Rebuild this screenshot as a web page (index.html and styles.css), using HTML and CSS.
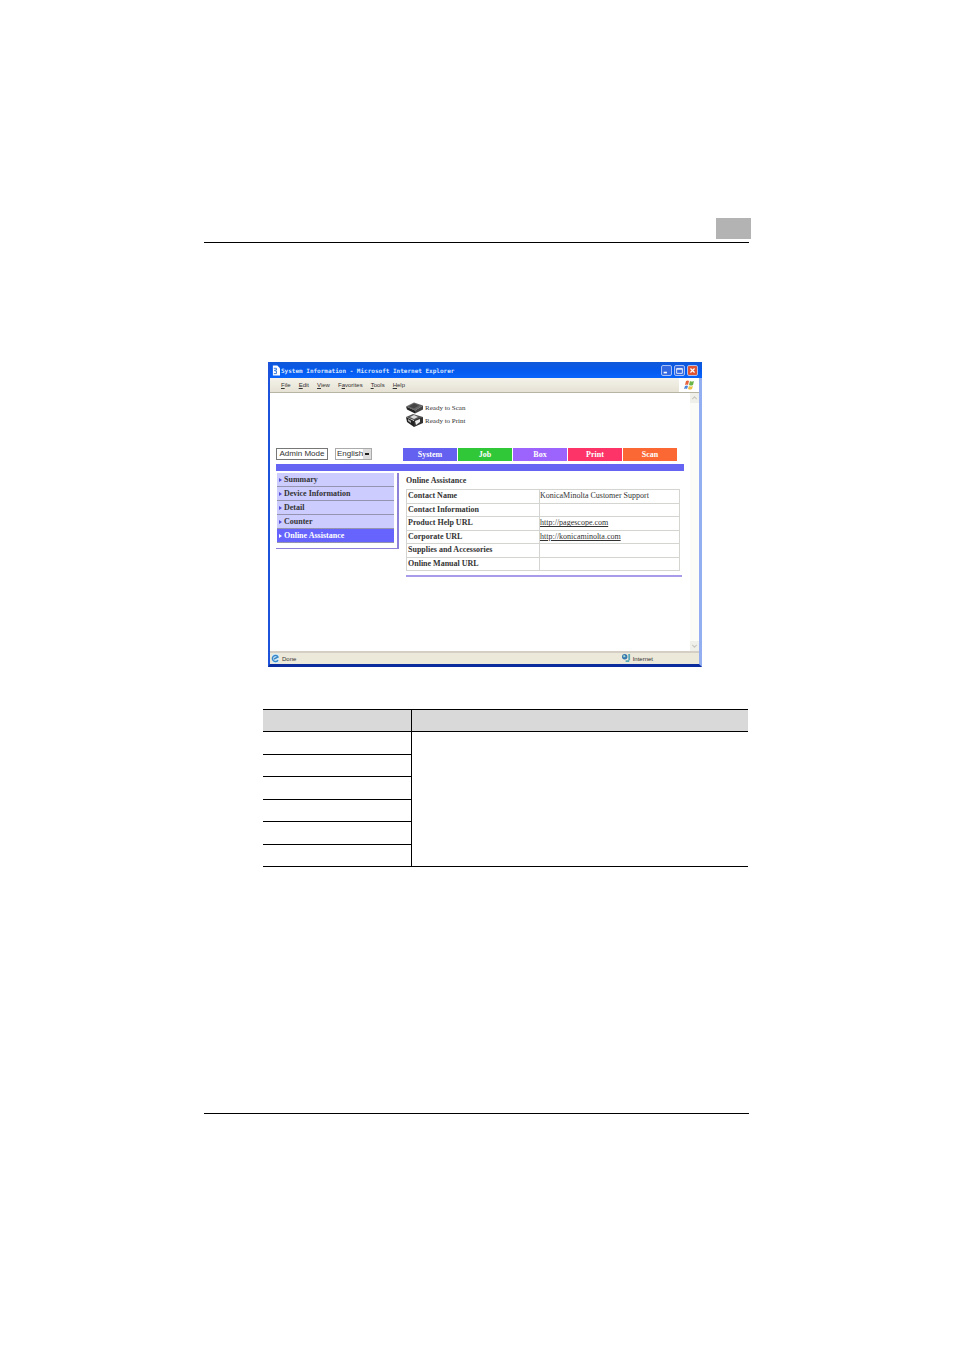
FILE: index.html
```
<!DOCTYPE html>
<html lang="en">
  <head>
    <meta charset="UTF-8" />
    <title>Online Assistance</title>
    <link rel="stylesheet" href="styles.css">
  </head>
  <body>
    <div class="page">
      <header class="page-header"><span class="chapter-box"></span></header>

      <main class="page-body">
        <div class="window">
          <div class="title-bar">
            <svg class="title-icon" viewBox="0 0 9 11">
              <path d="M1 0h5l3 3v8H1z" fill="#fff" />
              <path d="M2 3h3v2H3v1h2v3H2" fill="none" stroke="#2870d8" />
            </svg>
            <span class="title-text">System Information - Microsoft Internet Explorer</span>
            <div class="window-buttons">
              <button type="button" aria-label="Minimize"><svg viewBox="0 0 11 11"><path d="M2 8h4" stroke="#fff" stroke-width="2" /></svg></button>
              <button type="button" aria-label="Maximize"><svg viewBox="0 0 11 11"><path d="M2 3h7v6H2zM2 4h7" fill="none" stroke="#fff" /></svg></button>
              <button type="button" class="close" aria-label="Close"><svg viewBox="0 0 11 11"><path d="M3 3l5 5M8 3l-5 5" stroke="#fff" stroke-width="1.5" /></svg></button>
            </div>
          </div>

          <div class="menu-bar">
            <nav class="menu">
              <a href="#"><u>F</u>ile</a>
              <a href="#"><u>E</u>dit</a>
              <a href="#"><u>V</u>iew</a>
              <a href="#">F<u>a</u>vorites</a>
              <a href="#"><u>T</u>ools</a>
              <a href="#"><u>H</u>elp</a>
            </nav>
            <div class="flag">
              <svg viewBox="0 0 10 10">
                <path d="M2 1q2-1 3 0L4 5q-1-1-3 0z" fill="#e8643c" />
                <path d="M6 1q2 1 4 0L9 5Q7 6 5 5z" fill="#6cb648" />
                <path d="M1 6q2-1 3 0L3 9q-1-1-3 0z" fill="#4c86d8" />
                <path d="M5 6q2 1 4 0L8 9Q6 10 4 9z" fill="#f0c040" />
              </svg>
            </div>
          </div>

          <div class="viewport">
            <div class="content">
              <div class="status-list">
                <div class="status-item">
                  <svg viewBox="0 0 17 12">
                    <path d="M0 5l8-4 9 3-8 5z" fill="#666" />
                    <path d="M0 5l9 4v3L1 8z" fill="#222" />
                    <path d="M9 9l8-5v4l-8 4z" fill="#444" />
                    <path d="M3 5l5-3 5 2-5 3z" fill="#444" />
                  </svg>
                  Ready to Scan
                </div>
                <div class="status-item">
                  <svg viewBox="0 0 17 13">
                    <path d="M0 3l7-3 10 3-7 4z" fill="#555" />
                    <path d="M0 3l8 4v6L1 8z" fill="#222" />
                    <path d="M8 6l9-3v6l-9 4z" fill="#333" />
                    <path d="M4 3l4-2 4 2-4 2z" fill="#ddd" />
                    <path d="M9 7l5-2v3l-4 3z" fill="#eee" />
                    <path d="M2 5l3 2v2L2 7z" fill="#aaa" />
                  </svg>
                  Ready to Print
                </div>
              </div>

              <div class="toolbar">
                <div class="controls">
                  <button type="button" class="admin-button">Admin Mode</button>
                  <div class="language">
                    <select aria-label="Language">
                      <option>English</option>
                    </select>
                  </div>
                </div>
                <nav class="tabs">
                  <a href="#" class="tab-system">System</a>
                  <a href="#" class="tab-job">Job</a>
                  <a href="#" class="tab-box">Box</a>
                  <a href="#" class="tab-print">Print</a>
                  <a href="#" class="tab-scan">Scan</a>
                </nav>
              </div>

              <div class="divider"></div>

              <div class="columns">
                <nav class="side-menu">
                  <a href="#">Summary</a>
                  <a href="#">Device Information</a>
                  <a href="#">Detail</a>
                  <a href="#">Counter</a>
                  <a href="#" class="active">Online Assistance</a>
                </nav>
                <section class="details">
                  <h1>Online Assistance</h1>
                  <table class="info-table">
                    <tr><th>Contact Name</th><td>KonicaMinolta Customer Support</td></tr>
                    <tr><th>Contact Information</th><td></td></tr>
                    <tr><th>Product Help URL</th><td><a href="#">http://pagescope.com</a></td></tr>
                    <tr><th>Corporate URL</th><td><a href="#">http://konicaminolta.com</a></td></tr>
                    <tr><th>Supplies and Accessories</th><td></td></tr>
                    <tr><th>Online Manual URL</th><td></td></tr>
                  </table>
                </section>
              </div>
            </div>
            <div class="scrollbar">
              <svg viewBox="0 0 8 8"><path d="M2 5l2-2 2 2" fill="none" stroke="#c8c8c0" /></svg>
              <svg viewBox="0 0 8 8"><path d="M2 3l2 2 2-2" fill="none" stroke="#c8c8c0" /></svg>
            </div>
          </div>

          <div class="status-bar">
            <div class="status-left">
              <svg viewBox="0 0 9 9">
                <path d="M1 0h7v9H1z" fill="#d8ecf8" />
                <path d="M7 6a3 3 0 1 1 0-3L3 5" fill="none" stroke="#3888c8" stroke-width="1.5" />
              </svg>
              Done
            </div>
            <div class="status-right">
              <svg viewBox="0 0 10 10">
                <circle cx="3" cy="3" r="3" fill="#3878b0" />
                <path d="M1 2l2-1 1 2-2 1z" fill="#a8dcd0" />
                <path d="M8 0v7M4 8h4" stroke="#58a8b8" stroke-width="2" />
              </svg>
              Internet
            </div>
          </div>
        </div>

        <table class="manual-table">
          <thead>
            <tr><th></th><th></th></tr>
          </thead>
          <tbody>
            <tr><td></td><td rowspan="6"></td></tr>
            <tr><td></td></tr>
            <tr><td></td></tr>
            <tr><td></td></tr>
            <tr><td></td></tr>
            <tr><td></td></tr>
          </tbody>
        </table>
      </main>

      <footer class="page-footer"></footer>
    </div>
  </body>
</html>
```
FILE: styles.css
```
* {
  box-sizing: border-box;
}

body {
  margin: 0;
  background: #fff;
  color: #333;
  font-family: "Liberation Sans", Arial, sans-serif;
}

a {
  color: inherit;
  text-decoration: none;
}

.page {
  display: flex;
  flex-direction: column;
  min-height: 100vh;
  padding: 218px 205px 236px 204px;
}

.page-header {
  display: flex;
  justify-content: flex-end;
  padding-bottom: 3px;
  border-bottom: 1px solid #000;
}

.chapter-box {
  width: 35px;
  height: 21px;
  margin-right: -2px;
  background: #b3b3b3;
}

.page-body {
  flex: 1;
  padding: 119px 1px 0 59px;
}

.page-footer {
  border-top: 1px solid #000;
}

/* browser window */
.window {
  margin: 0 46px 0 5px;
  border: solid #1c52dc;
  border-width: 0 3px 3px 2px;
  border-right-color: #94aef2;
  border-bottom-color: #0a2c9c;
}

.title-bar {
  display: flex;
  align-items: center;
  height: 16px;
  margin-right: -3px;
  padding: 0 4px 0 2px;
  background: linear-gradient(#1058d8, #0458ec 50%, #0864fc);
  color: #d4e4ff;
}

.title-icon {
  width: 8px;
  height: 11px;
}

.title-text {
  flex: 1;
  margin-left: 1px;
  font: bold 6px "DejaVu Sans Mono", monospace;
  white-space: nowrap;
}

.window-buttons {
  display: flex;
  gap: 2px;
}

.window-buttons button {
  width: 11px;
  height: 11px;
  padding: 0;
  border: 1px solid #a8c0f4;
  border-radius: 2px;
  background: #3468e0;
}

.window-buttons .close {
  background: #e05434;
}

.window-buttons svg {
  display: block;
  width: 100%;
  height: 100%;
}

.menu-bar {
  display: flex;
  justify-content: space-between;
  height: 15px;
  border-bottom: 1px solid #b8b4a4;
  background: linear-gradient(#f4f2ea, #e6e2d4);
}

.menu {
  display: flex;
  align-items: center;
  gap: 8px;
  padding-left: 11px;
  font-size: 6px;
}

.flag {
  display: flex;
  align-items: center;
  justify-content: center;
  width: 20px;
  background: #fff;
}

.flag svg {
  width: 10px;
  height: 10px;
}

.viewport {
  display: flex;
  height: 258px;
  font-family: "Liberation Serif", "Times New Roman", serif;
}

.content {
  flex: 1;
  padding: 8px 6px 0;
}

.scrollbar {
  display: flex;
  flex-direction: column;
  justify-content: space-between;
  width: 9px;
  background: #fbfbf8;
}

.scrollbar svg {
  width: 9px;
  height: 10px;
  background: #f0f0ea;
}

.status-list {
  padding-left: 130px;
}

.status-item {
  display: flex;
  align-items: center;
  gap: 2px;
  height: 13px;
  font-size: 7px;
}

.status-item svg {
  width: 17px;
  height: 13px;
}

.toolbar {
  display: flex;
  margin-top: 21px;
  padding-right: 7px;
}

.controls {
  display: flex;
  align-items: flex-start;
  gap: 7px;
  width: 127px;
}

.admin-button,
.language select {
  display: block;
  height: 12px;
  padding: 0;
  border: 1px solid #777;
  background: #fff;
  color: #333;
  font-family: "Liberation Sans", Arial, sans-serif;
  font-size: 8px;
  line-height: 10px;
}

.admin-button {
  width: 52px;
}

.language {
  position: relative;
}

.language select {
  width: 37px;
  padding-left: 1px;
  border-color: #aaa;
  appearance: none;
}

.language::after {
  content: "";
  position: absolute;
  top: 1px;
  right: 1px;
  width: 8px;
  height: 10px;
  background: #ddd linear-gradient(#222, #222) center / 4px 2px no-repeat;
  pointer-events: none;
}

.tabs {
  display: flex;
  flex: 1;
  gap: 1px;
}

.tabs a {
  flex: 1;
  height: 13px;
  color: #fff;
  font-size: 8px;
  font-weight: bold;
  line-height: 13px;
  text-align: center;
}

.tab-system {
  background: #6460f0;
}

.tab-job {
  background: #30c838;
}

.tab-box {
  background: #9c64fc;
}

.tab-print {
  background: #fc3468;
}

.tab-scan {
  background: #fc6834;
}

.divider {
  height: 7px;
  margin-top: 3px;
  background: #6664f2;
}

.columns {
  display: flex;
  gap: 7px;
  padding: 2px 2px 0 0;
}

.side-menu {
  align-self: flex-start;
  width: 123px;
  padding: 0 3px 5px 1px;
  border: solid #8c80d8;
  border-width: 0 2px 1px 0;
}

.side-menu a {
  display: flex;
  align-items: center;
  gap: 2px;
  height: 14px;
  padding-left: 2px;
  border-bottom: 1px solid #9494b0;
  background: #ccccff;
  font-size: 8px;
  font-weight: bold;
}

.side-menu a::before {
  content: "";
  border: solid transparent;
  border-width: 2px 0 2px 3px;
  border-left-color: #5450dc;
}

.side-menu .active {
  background: #6664fc;
  color: #fff;
}

.side-menu .active::before {
  border-left-color: #fff;
}

.details {
  flex: 1;
  padding: 3px 0 4px;
  border-bottom: 2px solid #a89ce8;
}

.details h1 {
  margin: 0 0 3px;
  font-size: 8px;
  line-height: 10px;
}

.info-table {
  width: calc(100% - 2px);
  height: 82px;
  border: 1px solid #d0d0cc;
  border-collapse: collapse;
  font-size: 8px;
  line-height: 10px;
}

.info-table th,
.info-table td {
  padding: 0 1px;
  border: 1px solid #d4d4d0;
  text-align: left;
}

.info-table th {
  width: 133px;
}

.info-table td {
  padding-left: 0;
}

.info-table a {
  text-decoration: underline;
}

.status-bar {
  display: flex;
  align-items: center;
  justify-content: space-between;
  height: 13px;
  padding: 0 46px 0 1px;
  border-top: 2px solid #d4cec4;
  background: #ece8da;
  font-size: 6px;
}

.status-left,
.status-right {
  display: flex;
  align-items: center;
  gap: 2px;
}

.status-bar svg {
  width: 9px;
  height: 9px;
}

/* settings table under the window */
.manual-table {
  width: 100%;
  height: 158px;
  margin-top: 42px;
  border-collapse: collapse;
}

.manual-table th,
.manual-table td {
  padding: 0;
  border: solid #000;
  border-width: 1px 0;
}

.manual-table th {
  height: 22px;
  background: #d9d9d9;
}

.manual-table th:first-child {
  width: 148px;
}

.manual-table th:last-child,
.manual-table td[rowspan] {
  border-left-width: 1px;
}
```
